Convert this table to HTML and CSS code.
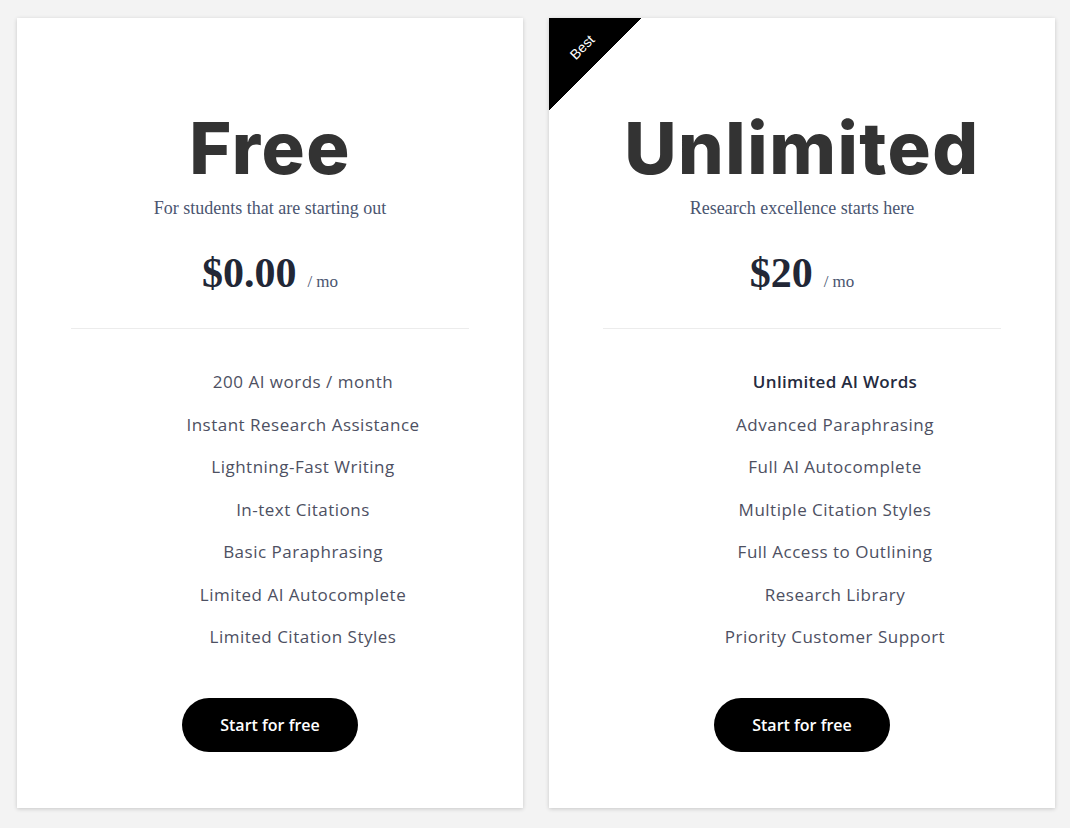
FILE: index.html
```html
<!DOCTYPE html>
<html>
<head>
<meta charset="utf-8">
<link rel="stylesheet" href="styles.css">
</head>
<body>
<div class="plans">
  <div class="card">
    <h2 class="title">Free</h2>
    <p class="sub">For students that are starting out</p>
    <div class="price"><span class="amount">$0.00</span><span class="per">/ mo</span></div>
    <hr class="divider">
    <ul class="features">
      <li>200 AI words / month</li>
      <li>Instant Research Assistance</li>
      <li>Lightning-Fast Writing</li>
      <li>In-text Citations</li>
      <li>Basic Paraphrasing</li>
      <li>Limited AI Autocomplete</li>
      <li>Limited Citation Styles</li>
    </ul>
    <a class="btn">Start for free</a>
  </div>
  <div class="card">
    <div class="ribbon"><span>Best</span></div>
    <h2 class="title">Unlimited</h2>
    <p class="sub">Research excellence starts here</p>
    <div class="price"><span class="amount">$20</span><span class="per">/ mo</span></div>
    <hr class="divider">
    <ul class="features">
      <li class="strong">Unlimited AI Words</li>
      <li>Advanced Paraphrasing</li>
      <li>Full AI Autocomplete</li>
      <li>Multiple Citation Styles</li>
      <li>Full Access to Outlining</li>
      <li>Research Library</li>
      <li>Priority Customer Support</li>
    </ul>
    <a class="btn">Start for free</a>
  </div>
</div>
</body>
</html>
```
FILE: styles.css
```css
* { box-sizing: border-box; }
html, body { margin: 0; padding: 0; }
body {
  background: #f3f3f3;
  font-family: "Open Sans", sans-serif;
  width: 1070px;
  height: 828px;
  overflow: hidden;
}
.plans {
  display: flex;
  gap: 26px;
  padding: 18px 15px 0 17px;
}
.card {
  position: relative;
  width: 506px;
  height: 790px;
  background: #fff;
  box-shadow: 0 1px 4px rgba(0,0,0,0.18);
  display: flex;
  flex-direction: column;
  align-items: center;
  padding-top: 92px;
  overflow: hidden;
}
.title {
  margin: 0;
  font-family: "Inter", sans-serif;
  font-weight: 800;
  font-size: 72px;
  line-height: 76px;
  color: #333;
  letter-spacing: 1.5px;
}
.sub {
  margin: 12px 0 0;
  font-family: "Liberation Serif", serif;
  font-size: 18px;
  line-height: 20px;
  color: #4a5570;
}
.price {
  margin-top: 31px;
  display: flex;
  align-items: baseline;
  gap: 11px;
  color: #222736;
  height: 50px;
}
.amount {
  font-family: "Liberation Serif", serif;
  font-weight: 700;
  font-size: 42px;
}
.per {
  font-family: "Liberation Serif", serif;
  font-size: 17px;
  color: #4a5570;
}
.divider {
  width: 398px;
  border: 0;
  border-top: 1px solid #ececec;
  margin: 29px 0 0;
}
.features {
  list-style: none;
  margin: 32px 0 0;
  padding: 0 0 0 66px;
  width: 398px;
  text-align: center;
}
.features li {
  font-family: "Open Sans", sans-serif;
  font-weight: 400;
  font-size: 17px;
  letter-spacing: 0.5px;
  line-height: 42.5px;
  color: #4d5062;
}
.features li.strong {
  font-weight: 600;
  letter-spacing: 0.3px;
  color: #252b40;
}
.btn {
  margin-top: 39px;
  width: 176px;
  height: 54px;
  border-radius: 27px;
  background: #000;
  color: #fff;
  font-family: "Open Sans", sans-serif;
  font-weight: 600;
  font-size: 16px;
  display: flex;
  align-items: center;
  justify-content: center;
}
.ribbon {
  position: absolute;
  top: 0;
  left: 0;
  width: 92px;
  height: 92px;
  background: linear-gradient(to bottom right, #000 50%, transparent 50%);
}
.ribbon span {
  position: absolute;
  top: 21px;
  left: 19px;
  transform: rotate(-45deg);
  color: #fff;
  font-family: "Liberation Sans", sans-serif;
  font-size: 14px;
}
```
